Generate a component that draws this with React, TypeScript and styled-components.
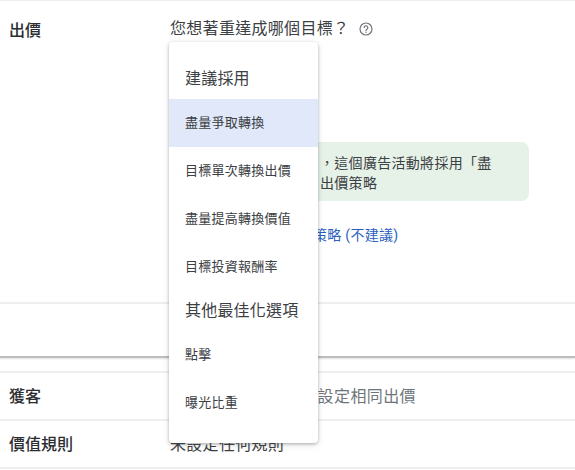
import React from 'react'
import styled, { createGlobalStyle } from 'styled-components'

const GlobalStyle = createGlobalStyle`
  html, body {
    margin: 0;
    padding: 0;
    background: #fff;
    overflow: hidden;
  }

  body {
    font-family: Roboto, "Noto Sans CJK TC", "Noto Sans", sans-serif;
    color: #3c4043;
  }
`

const HelpIcon = () => (
  <svg width="16" height="16" viewBox="0 0 16 16" fill="none">
    <circle cx="8" cy="8" r="6" stroke="#70757a" strokeWidth="1.2" />
    <path
      d="M6.2 6.6a1.8 1.8 0 1 1 2.9 1.4c-.7.5-1.1.9-1.1 1.6"
      stroke="#70757a"
      strokeWidth="1.2"
      strokeLinecap="round"
    />
    <circle cx="8" cy="11.3" r=".7" fill="#70757a" />
  </svg>
)

const suggested = ['盡量爭取轉換', '目標單次轉換出價', '盡量提高轉換價值', '目標投資報酬率']
const others = ['點擊', '曝光比重']

export default function App() {
  return (
    <Page>
      <GlobalStyle />
      <BiddingSection>
        <Label>出價</Label>
        <Body>
          <Question>
            您想著重達成哪個目標？
            <HelpIcon />
          </Question>
          <Notice>
            您未選取「任何目標」，這個廣告活動將採用「盡
            <br />
            量爭取轉換等自動化」出價策略
          </Notice>
          <StrategyLink>您也可以直接選取出價策略 (不建議)</StrategyLink>
        </Body>
      </BiddingSection>
      <EmptyRow />
      <SectionGap />
      <Row>
        <RowLabel>獲客</RowLabel>
        <MutedValue>為新客戶和現有客戶設定相同出價</MutedValue>
      </Row>
      <Row>
        <RowLabel>價值規則</RowLabel>
        <RowValue>未設定任何規則</RowValue>
      </Row>

      <Menu>
        <MenuHeading>建議採用</MenuHeading>
        {suggested.map((item, i) => (
          <MenuItem key={item} $selected={i === 0}>
            {item}
          </MenuItem>
        ))}
        <MenuHeading>其他最佳化選項</MenuHeading>
        {others.map(item => (
          <MenuItem key={item}>{item}</MenuItem>
        ))}
      </Menu>
    </Page>
  )
}

const Page = styled.div`
  position: relative;
  width: 575px;
  height: 470px;
  overflow: hidden;
  background: #fff;
  border-top: 1px solid #eeeeee;
  box-sizing: border-box;
`

const BiddingSection = styled.section`
  display: flex;
  height: 303px;
  box-sizing: border-box;
  padding: 18px 0 0 9px;
  border-bottom: 2px solid #efefef;
`

const Label = styled.div`
  width: 161px;
  font-size: 16px;
  line-height: 23px;
  font-weight: 500;
  color: #2b2d30;
`

const Body = styled.div`
  display: flex;
  flex-direction: column;
  align-items: flex-start;
`

const Question = styled.div`
  display: flex;
  align-items: center;
  gap: 9px;
  font-size: 16px;
  line-height: 20px;
  letter-spacing: 0.3px;
  color: #3c4043;
`

const Notice = styled.div`
  width: 359px;
  height: 59px;
  box-sizing: border-box;
  margin-top: 103px;
  padding: 11px 0 0 7px;
  background: #e6f2e8;
  border-radius: 8px;
  font-size: 14px;
  line-height: 20px;
  letter-spacing: 0.3px;
  text-spacing-trim: space-all;
  white-space: nowrap;
  overflow: hidden;
  color: #3c4043;
`

const StrategyLink = styled.a`
  margin-top: 24px;
  font-size: 14px;
  line-height: 20px;
  letter-spacing: 0.3px;
  color: #2a5fc0;
`

const EmptyRow = styled.div`
  height: 54px;
  box-sizing: border-box;
  border-bottom: 2px solid #bdbdbd;
  box-shadow: 0 1px 2px rgba(0, 0, 0, 0.12);
`

const SectionGap = styled.div`
  height: 15px;
  box-sizing: border-box;
  border-bottom: 2px solid #efefef;
`

const Row = styled.div`
  display: flex;
  align-items: center;
  height: 48px;
  box-sizing: border-box;
  padding: 0 0 2px 9px;
  border-bottom: 2px solid #efefef;
`

const RowLabel = styled.div`
  width: 161px;
  font-size: 16px;
  font-weight: 500;
  color: #2b2d30;
`

const RowValue = styled.div`
  font-size: 16px;
  letter-spacing: 0.3px;
  color: #3c4043;
`

const MutedValue = styled(RowValue)`
  letter-spacing: 0.4px;
  color: #70757a;
`

const Menu = styled.div`
  position: absolute;
  top: 41px;
  left: 169px;
  width: 149px;
  height: 401px;
  box-sizing: border-box;
  padding: 17px 0 16px;
  background: #fff;
  border-radius: 4px;
  box-shadow: 0 1px 3px rgba(60, 64, 67, 0.35), 0 2px 6px rgba(60, 64, 67, 0.15);
`

const MenuHeading = styled.div`
  display: flex;
  align-items: center;
  height: 40px;
  box-sizing: border-box;
  padding: 0 0 4px 16px;
  font-size: 16px;
  letter-spacing: 0.2px;
  white-space: nowrap;
  color: #3c4043;
`

const MenuItem = styled.div<{ $selected?: boolean }>`
  display: flex;
  align-items: center;
  height: 48px;
  box-sizing: border-box;
  padding: 0 0 4px 16px;
  font-size: 13px;
  letter-spacing: 0.25px;
  white-space: nowrap;
  color: #3c4043;
  background: ${props => (props.$selected ? '#e0e8f9' : 'transparent')};
`
